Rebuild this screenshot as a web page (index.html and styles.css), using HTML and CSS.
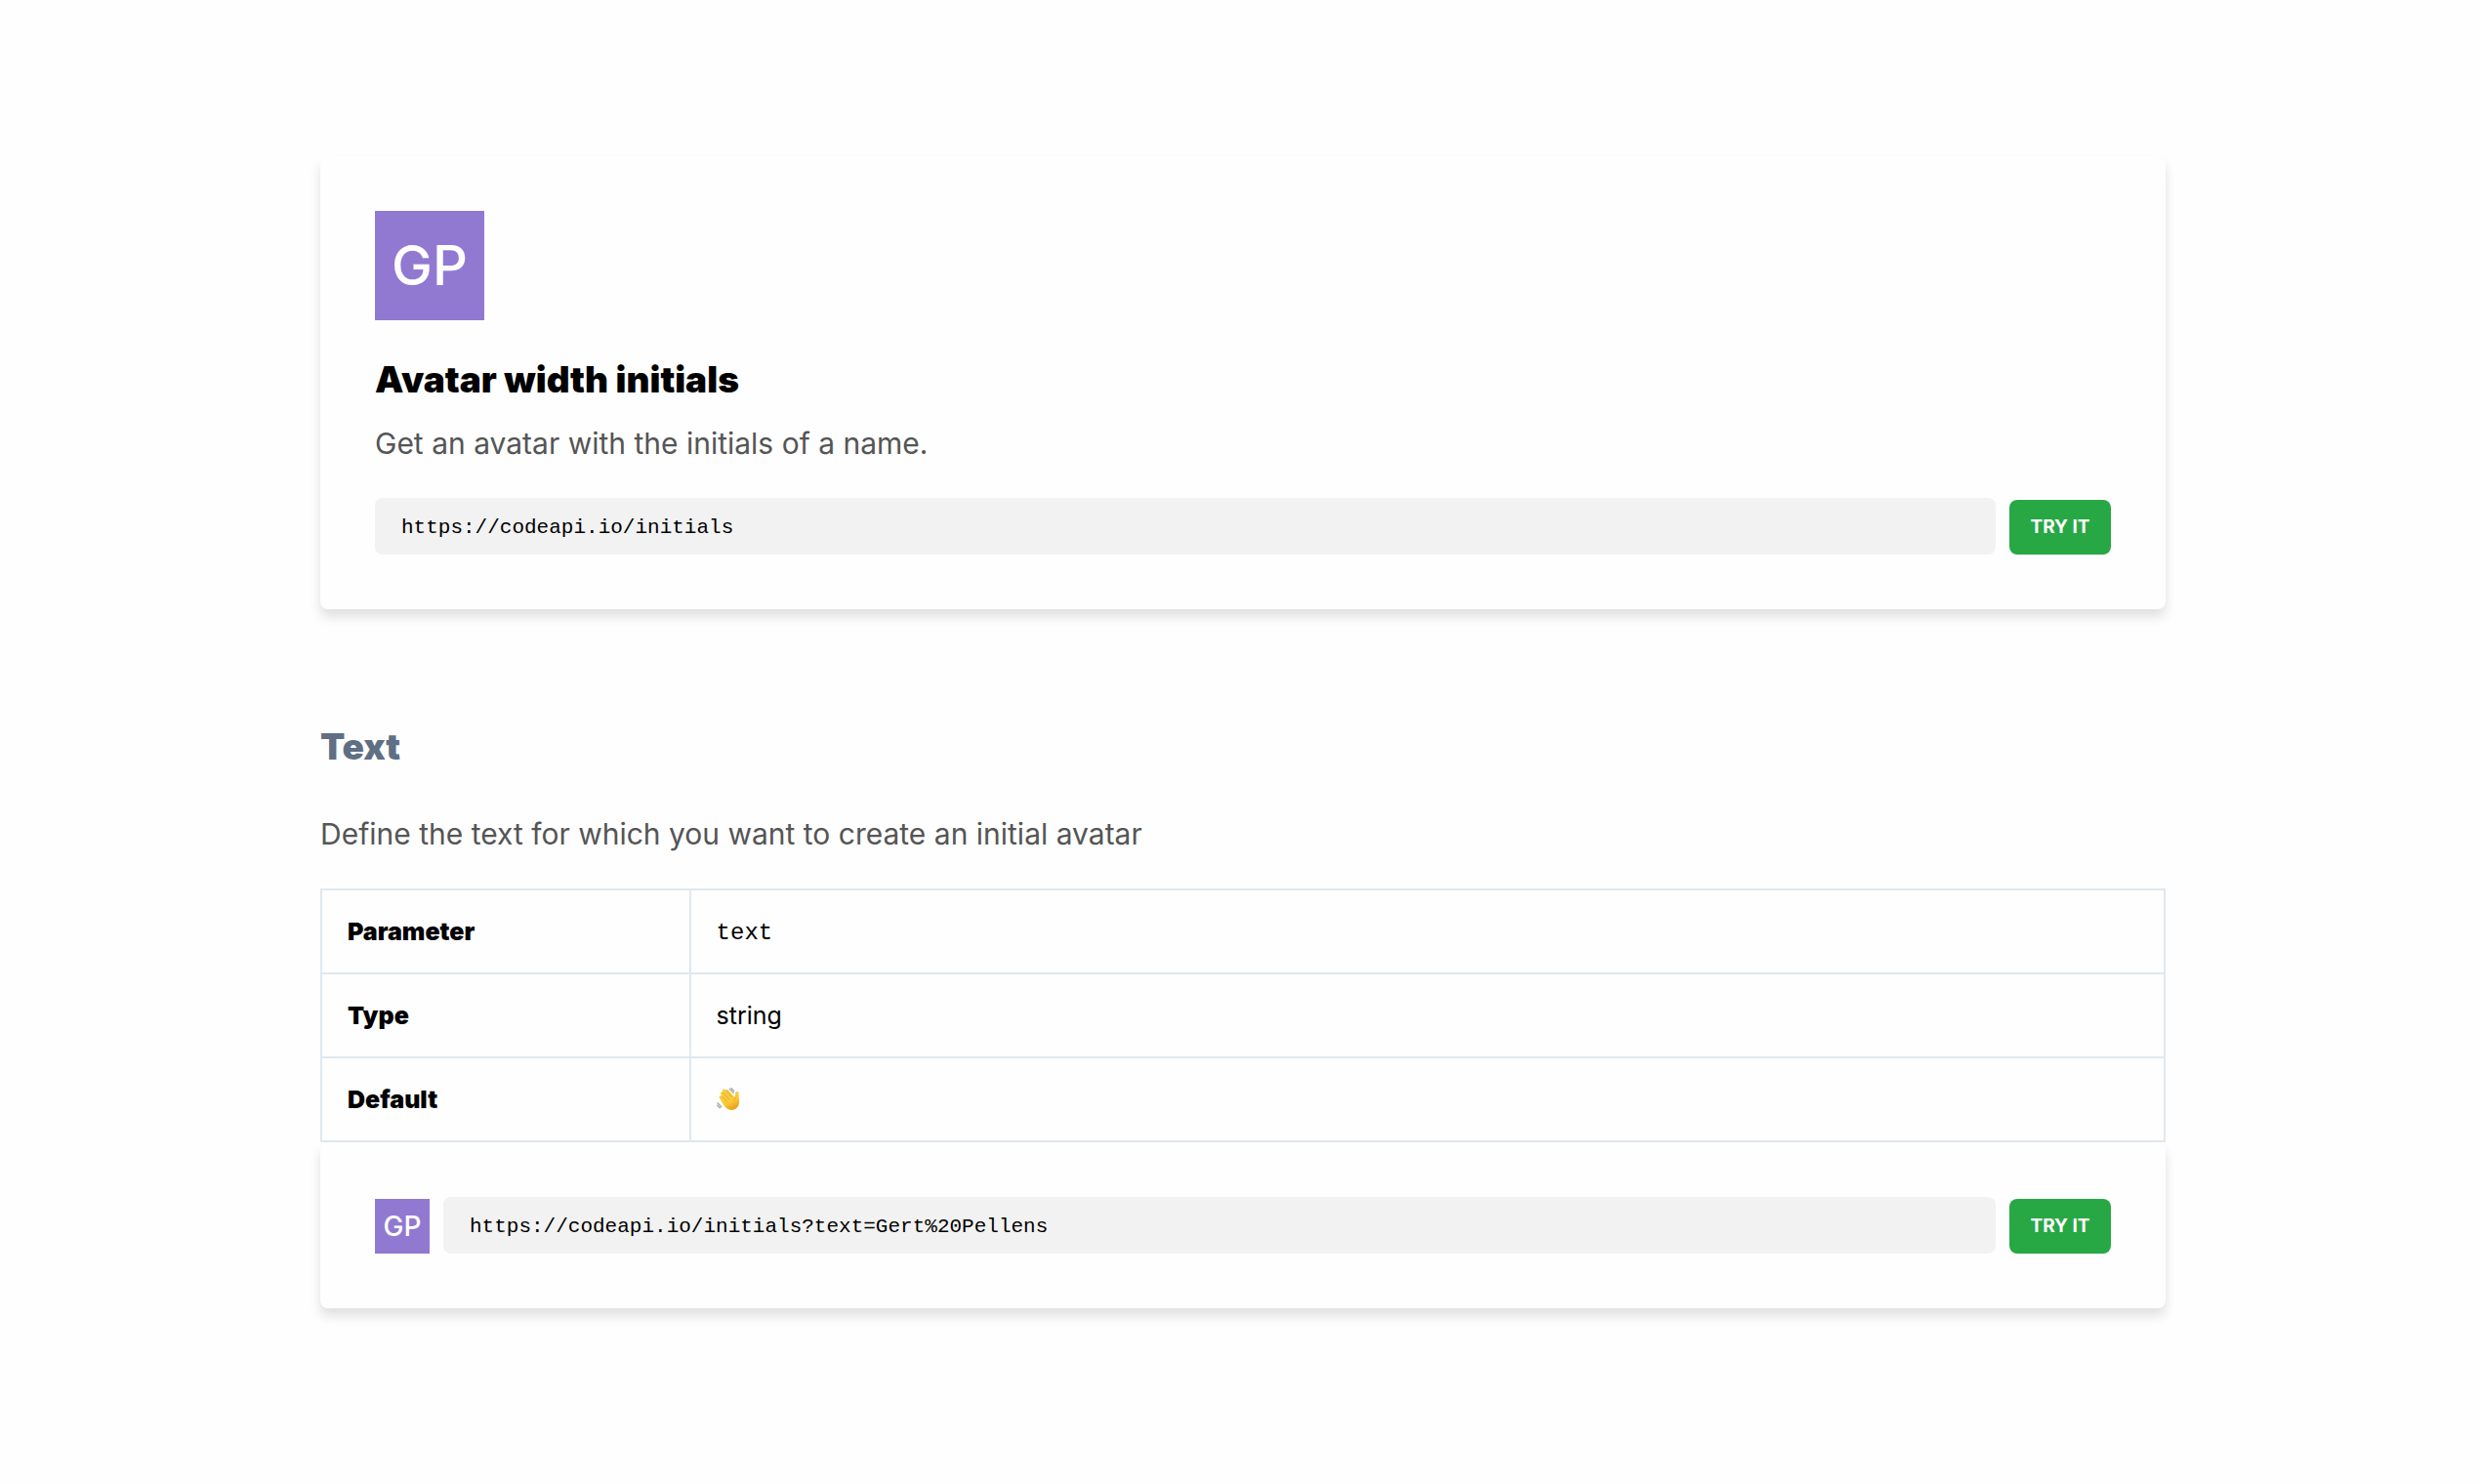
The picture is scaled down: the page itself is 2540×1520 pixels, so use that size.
FILE: index.html
```html
<!DOCTYPE html>
<html lang="en">
<head>
    <meta charset="UTF-8">
    <meta name="viewport" content="width=device-width, initial-scale=1.0">
    <title>Avatar width initials</title>
    <link rel="stylesheet" href="styles.css">
</head>
<body>
    <main class="container">
        <!-- Endpoint -->
        <section class="card">
            <div class="avatar avatar-large">GP</div>
            <h1 class="title">Avatar width initials</h1>
            <p class="description">Get an avatar with the initials of a name.</p>
            <form class="try">
                <input class="url" type="text" aria-label="Endpoint" value="https://codeapi.io/initials" readonly>
                <button class="button" type="button">TRY IT</button>
            </form>
        </section>

        <!-- Text parameter -->
        <section class="parameter">
            <h2 class="title">Text</h2>
            <p class="description">Define the text for which you want to create an initial avatar</p>
            <table class="details">
                <tr>
                    <th scope="row">Parameter</th>
                    <td class="code">text</td>
                </tr>
                <tr>
                    <th scope="row">Type</th>
                    <td>string</td>
                </tr>
                <tr>
                    <th scope="row">Default</th>
                    <td>
                        <svg class="wave" viewBox="0 0 24 24" role="img" aria-label="Waving hand">
                            <defs>
                                <linearGradient id="skin" x1="0" y1="0" x2="0.5" y2="1">
                                    <stop offset="0" stop-color="#f8cf48"/>
                                    <stop offset="0.7" stop-color="#fbc936"/>
                                    <stop offset="1" stop-color="#e9a51f"/>
                                </linearGradient>
                            </defs>
                            <path fill="url(#skin)" d="M3.1 8.8c.7-.8 1.5-.6 2.2 0L4.1 6.300c-.6-1.300.8-2.500 2-1.500L6 3.300C5.600 1.800 7.300.9 8.500 2l1 .9c.3-1.300 1.700-1.300 2.500-.4l6.100 7c.5.500.9.300.9-.5l.1-2.200c.1-2.300 1.100-3.300 2.700-2.500 1.400.6.7 2.200.8 3.800.1 2.300.9 4.300.4 7.500-.5 4.300-3.600 7.400-7.400 7.400-3.300 0-5.700-1.600-7.900-4.500L3.200 11.300c-.7-.9-.8-1.700-.1-2.500z"/>
                            <path fill="none" stroke="#dd9c2b" stroke-width=".7" stroke-linecap="round" d="M5.300 8.800l5.200 5.400M6.100 4.800l6.500 7M9.500 2.900l5.800 6.500M19 9.500c.2 1.500-.5 2.600-1.600 3.700"/>
                            <path fill="none" stroke="#a8a8ac" stroke-width="1.3" stroke-linecap="round" d="M13.300 1.300l3.900 4M15.200.8l2.500 2.600M1 15.800l3.800 4M.7 18.200l2.500 2.500"/>
                        </svg>
                    </td>
                </tr>
            </table>
            <div class="card">
                <form class="try">
                    <div class="avatar">GP</div>
                    <input class="url" type="text" aria-label="Example" value="https://codeapi.io/initials?text=Gert%20Pellens" readonly>
                    <button class="button" type="button">TRY IT</button>
                </form>
            </div>
        </section>
    </main>
</body>
</html>
```
FILE: styles.css
```css
* {
    margin: 0;
    padding: 0;
    box-sizing: border-box;
}

body {
    background: #fefefe;
    color: #000;
    font-family: Inter, sans-serif;
    font-size: 25px;
    line-height: 36px;
}

.container {
    max-width: 1896px;
    margin: 0 auto;
    padding: 160px 0 160px 6px;
}

/* Cards */
.card {
    background: #fefefe;
    padding: 56px;
    border-radius: 8px;
    box-shadow: 0 8px 12px rgba(0, 0, 0, 0.12);
}

.avatar {
    display: flex;
    flex-shrink: 0;
    align-items: center;
    justify-content: center;
    width: 56px;
    height: 56px;
    background: #9179d2;
    color: #fff;
    font-size: 28px;
    font-weight: 500;
}

.avatar-large {
    width: 112px;
    height: 112px;
    margin-bottom: 34px;
    font-size: 56px;
}

/* Text */
.title {
    margin-bottom: 14px;
    font-size: 37px;
    font-weight: 900;
    line-height: 54px;
}

.description {
    margin-bottom: 32px;
    color: #555;
    font-size: 30px;
    line-height: 48px;
}

/* Try it row */
.try {
    display: flex;
    align-items: flex-end;
    gap: 14px;
}

.url {
    flex: 1;
    min-width: 0;
    height: 58px;
    padding: 2px 27px 0;
    border: none;
    border-radius: 8px;
    background: #f2f2f2;
    color: #000;
    font-family: "Liberation Mono", monospace;
    font-size: 21px;
}

.button {
    width: 104px;
    height: 56px;
    padding-bottom: 2px;
    border: none;
    border-radius: 8px;
    background: #28a745;
    color: #fff;
    font-family: inherit;
    font-size: 19px;
    font-weight: 700;
    cursor: pointer;
}

/* Parameter */
.parameter {
    margin-top: 114px;
}

.parameter .title {
    margin-bottom: 38px;
    color: #5f6f84;
}

.details {
    width: 100%;
    border-collapse: collapse;
    table-layout: fixed;
}

.details th,
.details td {
    height: 86px;
    padding: 0 26px;
    border: 2px solid #e0e8f0;
    text-align: left;
}

.details th {
    width: 20%;
    font-weight: 900;
}

.details .code {
    padding-top: 4px;
    font-family: "Liberation Mono", monospace;
    font-size: 24px;
}

.wave {
    display: block;
    width: 24px;
    height: 24px;
}
```
